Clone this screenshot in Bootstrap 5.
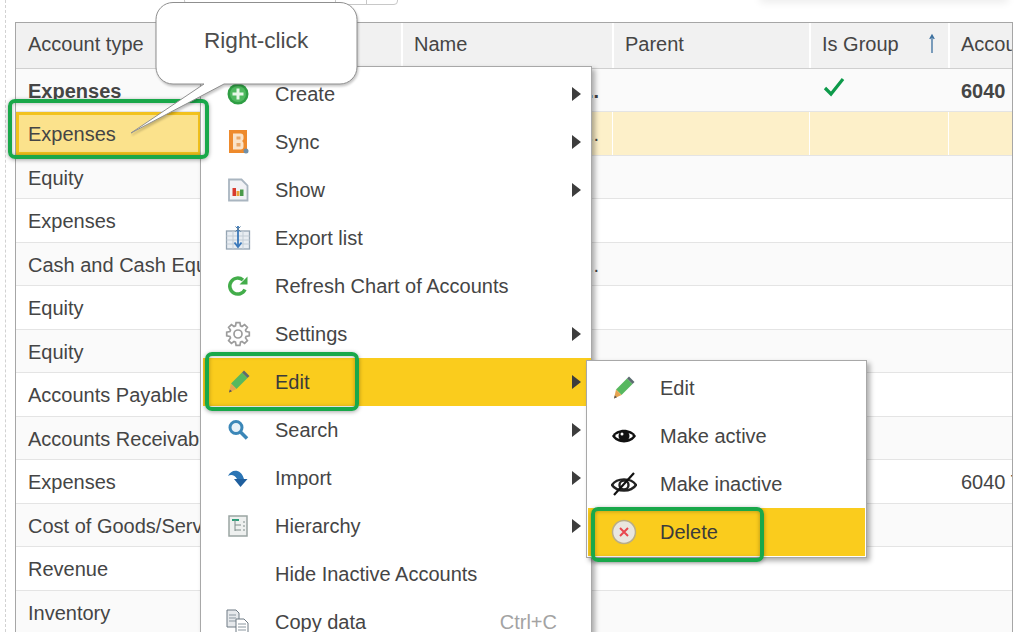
<!DOCTYPE html>
<html lang="en">
<head>
<meta charset="UTF-8">
<title>Chart of Accounts</title>
<link href="https://cdn.jsdelivr.net/npm/bootstrap@5.3.0/dist/css/bootstrap.min.css" rel="stylesheet">
<style>
html, body { height: 100%; }
body { background: #fff; overflow: hidden; position: relative; font-family: "Liberation Sans", Arial, sans-serif; font-size: 20px; color: #454545; }
.page-wrap { margin-left: 5px; border-left: 1px dashed #d2d2d2; padding: 22px 10px 0 9px; height: 632px; overflow: hidden; }
.acct-grid { border: 1px solid #a6a6a6; border-bottom: 0; height: 610px; overflow: hidden; }
.grid-row { display: flex; height: 44px; border-bottom: 1px solid #e4e4e4; }
.grid-row:nth-child(even) { background: #fafafa; height: 43px; }
.grid-head { height: 46px; background: #f1f1f1 !important; border-bottom: 1px solid #cfcfcf; }
.grid-head .cell { box-shadow: inset 2px 0 0 #fff; }
.cell { flex: none; padding: 0 13px; line-height: 44px; white-space: nowrap; overflow: hidden; }
.grid-head .cell { line-height: 43px; }
.c1 { width: 185px; padding-left: 12px; }
.grid-head .c1 { box-shadow: none; }
.c2 { width: 200px; }
.c3 { width: 211px; text-align: right; }
.grid-head .c3 { text-align: left; }
.c4 { width: 197px; }
.c5 { width: 139px; }
.c6 { width: 70px; }
.row-sel { background: #fdf0c9 !important; }
.row-sel .cell { box-shadow: inset 1px 0 0 #fff; }
.row-sel .cell-focus { background: #fbe28c; box-shadow: inset 0 0 0 3px #f2c21e; }
.row-bold { font-weight: 700; }
.ok-mark { display: block; margin: 8px 0 0 1px; }
.toolbar-stub { position: absolute; top: -6px; left: 184px; width: 214px; height: 11px; border: 1px solid #c8c8c8; border-radius: 4px; }
.toolbar-stub i { position: absolute; top: 0; bottom: 0; width: 1px; background: #c8c8c8; }
.toolbar-blur { position: absolute; top: -8px; left: 760px; width: 248px; height: 8px; box-shadow: 0 2px 9px rgba(0,0,0,.09); }
.ctx-menu { position: absolute; background: #fff; border: 1px solid #a8a8a8; box-shadow: 3px 3px 5px rgba(0,0,0,.32); }
.menu-main { left: 200px; top: 66px; width: 392px; height: 590px; padding-top: 3px; }
.menu-sub { left: 586px; top: 360px; width: 281px; height: 198px; padding: 3px 1px; }
.menu-row { display: flex; align-items: center; height: 48px; position: relative; }
.menu-row.is-hot { background: #facc1d; color: #3b3b3b; }
.menu-main .menu-row.is-hot { margin-left: 2px; }
.menu-ico { flex: none; width: 74px; display: flex; justify-content: center; }
.menu-main .is-hot .menu-ico { width: 72px; }
.menu-sub .menu-ico { width: 72px; }
.menu-arrow { position: absolute; right: 10px; top: 17px; border-left: 9px solid #3d3d3d; border-top: 7px solid transparent; border-bottom: 7px solid transparent; }
.menu-key { position: absolute; right: 34px; color: #a3a3a3; }
.mark-green { position: absolute; border: 4px solid #19a84a; border-radius: 7px; box-shadow: 0 1px 4px rgba(0,0,0,.35), inset 0 0 4px rgba(0,0,0,.3); }
.callout { position: absolute; left: 128px; top: 2px; width: 236px; height: 134px; overflow: visible; filter: drop-shadow(1px 2px 1px rgba(0,0,0,.22)); }
.callout-text { position: absolute; left: 204px; top: 28px; font-size: 22.6px; line-height: 26px; color: #4d4d4d; }
</style>
</head>
<body>
<div class="page-wrap">
    <div class="acct-grid" id="grid"></div>
</div>
<div class="toolbar-stub"><i style="left:150px"></i><i style="left:181px"></i></div>
<div class="toolbar-blur"></div>

<div class="ctx-menu menu-main" id="mainMenu"></div>
<div class="ctx-menu menu-sub" id="subMenu"></div>

<div class="mark-green" style="left:8px;top:99px;width:201px;height:60px"></div>

<svg class="callout" viewBox="128 2 236 134">
    <path d="M173 2.500H340a17 17 0 0 1 17 17V67a17 17 0 0 1-17 17H224L131 133 204 84H173a17 17 0 0 1-17-17V19.500a17 17 0 0 1 17-17Z" fill="#fff" stroke="#8f8f8f" stroke-width="1"/>
</svg>
<div class="callout-text">Right-click</div>

<div class="mark-green" style="left:205px;top:352px;width:154px;height:59px"></div>
<div class="mark-green" style="left:591px;top:507px;width:173px;height:55px"></div>

<script>
    // 8 tooth outline for the settings icon
    function gearPoints() {
        const pts = [];
        for (let i = 0; i < 8; i++) {
            const a = i * Math.PI / 4;
            [[-0.30, 8.5], [-0.17, 11.5], [0.17, 11.5], [0.30, 8.5]].forEach(([d, r]) => {
                pts.push((13 + r * Math.cos(a + d)).toFixed(1) + "," + (13 + r * Math.sin(a + d)).toFixed(1));
            });
        }
        return pts.join(" ");
    }

    const ICONS = {
        create: '<svg width="24" height="24" viewBox="0 0 24 24"><circle cx="12" cy="12" r="10.500" fill="#2f9e44"/><circle cx="12" cy="12" r="8" fill="#4fb95f"/><path d="M12 6.500v11M6.500 12h11" stroke="#e8f7e8" stroke-width="3"/></svg>',
        sync: '<svg width="24" height="26" viewBox="0 0 24 26"><rect x="3" y="1" width="18" height="23" fill="#ee8a2c"/><path d="M7 4.500h7.500a3 3 0 0 1 3 3v2a3 3 0 0 1-1.500 2.500 3 3 0 0 1 1.500 2.500v3a3 3 0 0 1-3 3H7Z" fill="#fae3c8"/><rect x="10.500" y="7.500" width="4" height="3" fill="#e9a868"/><rect x="10.500" y="14" width="4" height="3.500" fill="#e9a868"/><circle cx="20" cy="22" r="2.500" fill="#6f8fa8"/></svg>',
        show: '<svg width="24" height="24" viewBox="0 0 24 24"><path d="M3 1.500h12.500l6 6V22.500H3Z" fill="#f1f2f5" stroke="#a9b5c0" stroke-width="1.800"/><rect x="6.500" y="10" width="3.500" height="8" fill="#d83a2e"/><rect x="10.500" y="13" width="3" height="5" fill="#e8a33a"/><rect x="14" y="11.500" width="3.500" height="6.500" fill="#4a9a4a"/></svg>',
        exportList: '<svg width="26" height="26" viewBox="0 0 26 26"><rect x="1.500" y="6" width="23" height="18" fill="#e8edf2" stroke="#94a4b2" stroke-width="1.300"/><path d="M8 6v18M18 6v18M1.500 11h23M1.500 15h23M1.500 19h23" stroke="#c3cdd6"/><path d="M13 1v20M9.500 17.500 13 22l3.500-4.500" fill="none" stroke="#3a78ba" stroke-width="1.800"/><path d="M10.500 1.500 13 4l2.500-2.500M10.500 6.500 13 4l2.500 2.500" fill="none" stroke="#5a7fa0"/></svg>',
        refresh: '<svg width="24" height="24" viewBox="0 0 24 24"><path d="M19 15.500A8 8 0 1 1 17 6" fill="none" stroke="#43ad4a" stroke-width="3.500"/><path d="M13.500 10.500h8v-8Z" fill="#43ad4a"/></svg>',
        gear: '<svg width="26" height="26" viewBox="0 0 26 26"><polygon points="' + gearPoints() + '" fill="none" stroke="#9c9c9c" stroke-width="1.700"/><circle cx="13" cy="13" r="4" fill="none" stroke="#9c9c9c" stroke-width="1.700"/></svg>',
        pencil: '<svg width="24" height="24" viewBox="0 0 24 24"><path d="M4 13.500 15 2.500l5.500 5.500-11 11Z" fill="#57b85f"/><path d="M15 2.500 17 .5l5.500 5.500-2 2Z" fill="#5c6b70"/><path d="M4 13.500l5.500 5.500-7.500 3.500Z" fill="#e6a451"/><path d="M2.800 19.500 2 22.500l3-1.300Z" fill="#555"/></svg>',
        search: '<svg width="24" height="24" viewBox="0 0 24 24"><circle cx="10" cy="9.500" r="6" fill="#e7f1f8" stroke="#3b87b8" stroke-width="3"/><path d="M14.500 14l6.500 6.500" stroke="#3b87b8" stroke-width="3.500"/></svg>',
        importIco: '<svg width="24" height="24" viewBox="0 0 24 24"><path d="M2 10C5 3 15 2 18 13H11C9 9 5 8 2 10Z" fill="#2b75b5"/><path d="M8 13h13.500L14.500 21Z" fill="#1f5f9e"/></svg>',
        hierarchy: '<svg width="24" height="24" viewBox="0 0 24 24"><rect x="3" y="2" width="18" height="20" fill="#eef0ef" stroke="#9aa5a3" stroke-width="1.500"/><path d="M6 6h7" stroke="#2c9d78" stroke-width="2"/><path d="M9 6v11M9 11h6M9 16h6M17 8h2M17 12h2M17 16h2" stroke="#7f8c8a"/></svg>',
        copy: '<svg width="26" height="26" viewBox="0 0 26 26"><path d="M2 1h9l3 3v14H2Z" fill="#e6e9ec" stroke="#6e7a84"/><path d="M4 6h7M4 9h7M4 12h7" stroke="#8b97a0"/><path d="M11 10h8l4 4v11H11Z" fill="#fff" stroke="#6e7a84"/><path d="M13 15h8M13 18h8M13 21h8" stroke="#8b97a0"/></svg>',
        eye: '<svg width="26" height="18" viewBox="0 0 26 18"><path d="M1 9C6 .5 20 .5 25 9 20 17.500 6 17.500 1 9Z" fill="#111"/><path d="M4 9C8 4 18 4 22 9 18 14 8 14 4 9Z" fill="#fff"/><circle cx="13" cy="9" r="5.500" fill="#111"/><circle cx="11" cy="7" r="1.500" fill="#fff"/></svg>',
        eyeOff: '<svg width="26" height="24" viewBox="0 0 26 24"><path d="M1 13C6 5.500 20 5.500 25 13 20 20.500 6 20.500 1 13Z" fill="none" stroke="#222" stroke-width="2.400"/><circle cx="13" cy="13" r="4.500" fill="none" stroke="#222" stroke-width="2.400"/><path d="M3 23 23 1" stroke="#111" stroke-width="2.200"/></svg>',
        del: '<svg width="26" height="26" viewBox="0 0 26 26"><circle cx="13" cy="13" r="11.500" fill="#e9e6df" stroke="#b9ad85" stroke-width="1.500"/><path d="M9 9l8 8M17 9l-8 8" stroke="#e8474f" stroke-width="2"/></svg>'
    };

    const mainItems = [
        ["create", "Create", true], ["sync", "Sync", true], ["show", "Show", true],
        ["exportList", "Export list"], ["refresh", "Refresh Chart of Accounts"],
        ["gear", "Settings", true], ["pencil", "Edit", true, true], ["search", "Search", true],
        ["importIco", "Import", true], ["hierarchy", "Hierarchy", true],
        [null, "Hide Inactive Accounts"], ["copy", "Copy data", false, false, "Ctrl+C"]
    ];
    const subItems = [
        ["pencil", "Edit"], ["eye", "Make active"], ["eyeOff", "Make inactive"], ["del", "Delete", false, true]
    ];

    function menuHtml(items) {
        return items.map(([icon, label, arrow, hot, key]) =>
            `<div class="menu-row${hot ? " is-hot" : ""}">
                <span class="menu-ico">${icon ? ICONS[icon] : ""}</span>
                <span>${label}</span>
                ${key ? `<span class="menu-key">${key}</span>` : ""}
                ${arrow ? '<span class="menu-arrow"></span>' : ""}
            </div>`).join("");
    }
    document.getElementById("mainMenu").innerHTML = menuHtml(mainItems);
    document.getElementById("subMenu").innerHTML = menuHtml(subItems);

    const types = ["Expenses", "Expenses", "Equity", "Expenses", "Cash and Cash Equivalents", "Equity", "Equity",
        "Accounts Payable", "Accounts Receivable", "Expenses", "Cost of Goods/Services", "Revenue", "Inventory", "Equity"];
    const dotted = [0, 1, 4];
    let html = `<div class="grid-row grid-head">
        <div class="cell c1">Account type</div><div class="cell c2"></div><div class="cell c3">Name</div>
        <div class="cell c4">Parent</div>
        <div class="cell c5 d-flex justify-content-between"><span>Is Group</span><svg width="6" height="44" viewBox="0 0 6 44"><path d="M3 12v18M.8 16 3 12l2.200 4" fill="none" stroke="#3b6f9e" stroke-width="1.300"/></svg></div>
        <div class="cell c6">Account</div></div>`;
    types.forEach((t, i) => {
        const sel = i === 1, bold = i === 0;
        html += `<div class="grid-row${sel ? " row-sel" : ""}${bold ? " row-bold" : ""}">
            <div class="cell c1${sel ? " cell-focus" : ""}">${t}</div><div class="cell c2"></div><div class="cell c3">${dotted.includes(i) ? "..." : ""}</div><div class="cell c4"></div>
            <div class="cell c5">${bold ? '<svg class="ok-mark" width="22" height="20" viewBox="0 0 22 20"><path d="M2 11l6 6L20 2" fill="none" stroke="#0d9a4a" stroke-width="3.200"/></svg>' : ""}</div>
            <div class="cell c6">${bold ? "6040" : i === 9 ? "6040 T" : ""}</div></div>`;
    });
    document.getElementById("grid").innerHTML = html;
</script>
<script src="https://cdn.jsdelivr.net/npm/bootstrap@5.3.0/dist/js/bootstrap.bundle.min.js"></script>
</body>
</html>
